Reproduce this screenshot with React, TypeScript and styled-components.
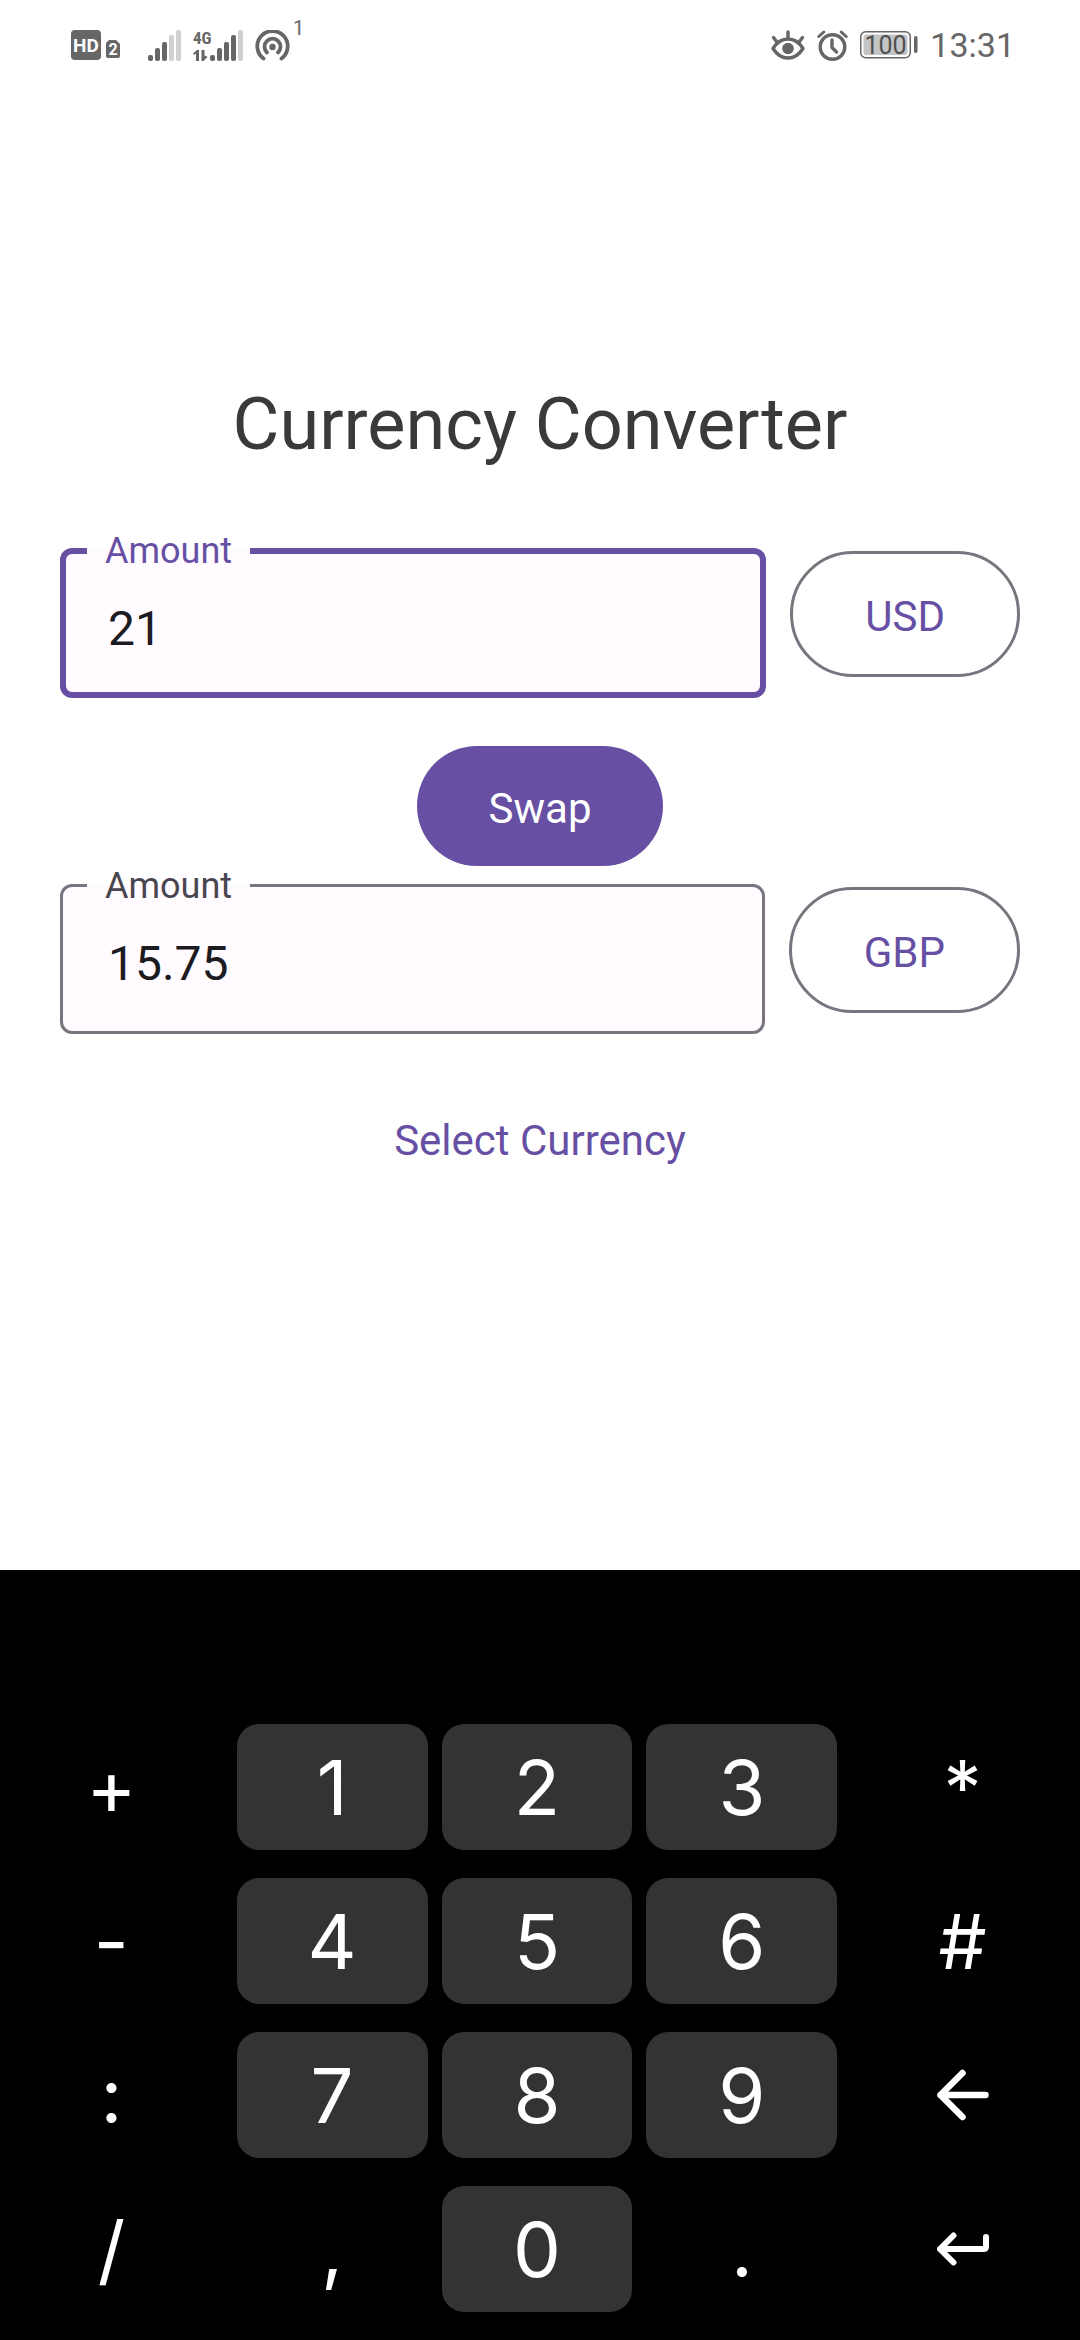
import React, { useState } from 'react';
import styled, { createGlobalStyle } from 'styled-components';

const color = {
  primary: '#6750a4',
  outline: '#79747e',
  field: '#fffbff',
  ink: '#1c1b1f',
  label: '#49454f',
  title: '#3a3a3c',
  status: '#666666',
  faint: '#d0d0d0',
  key: '#333333',
};

const GlobalStyle = createGlobalStyle`
  *, *::before, *::after { box-sizing: border-box; }
  body { margin: 0; background: #fff; }
  button, input { font: inherit; }
`;

const Screen = styled.div`
  min-height: 100vh;
  display: flex;
  flex-direction: column;
  font-family: Roboto, sans-serif;
  color: ${color.ink};
`;

/* Status bar */

const StatusBar = styled.header`
  height: 90px;
  padding: 0 65px 0 71px;
  display: flex;
  align-items: center;
  justify-content: space-between;
  color: ${color.status};
`;

const StatusGroup = styled.div<{ $gap: number }>`
  display: flex;
  align-items: center;
  gap: ${(p) => p.$gap}px;

  svg { display: block; flex: none; }
`;

const Count = styled.span`
  align-self: flex-start;
  font-size: 20px;
  line-height: 20px;
  margin-top: -12px;
`;

const Clock = styled.time`
  font-size: 34px;
  line-height: 40px;
`;

/* Converter */

const Main = styled.main`
  flex: 1;
  display: flex;
  flex-direction: column;
  align-items: center;
  justify-content: center;
  padding: 0 60px 80px;
`;

const Title = styled.h1`
  margin: 0 0 64px;
  font-size: 72px;
  line-height: 84px;
  font-weight: 400;
  color: ${color.title};
`;

const Row = styled.div`
  width: 100%;
  display: flex;
  align-items: center;
  gap: 24px;
`;

const Field = styled.fieldset<{ $active?: boolean }>`
  flex: 1;
  min-width: 0;
  margin: 0;
  padding: ${(p) => (p.$active ? '2px 0 7px' : '2px 0 11px')};
  border: ${(p) => (p.$active ? `6px solid ${color.primary}` : `3px solid ${color.outline}`)};
  border-radius: 12px;
  background: ${color.field};
  color: ${(p) => (p.$active ? color.primary : color.label)};
`;

const Legend = styled.legend<{ $active?: boolean }>`
  margin-left: ${(p) => (p.$active ? 21 : 24)}px;
  padding: 0 18px;
  font-size: 36px;
  line-height: 40px;
`;

const AmountInput = styled.input<{ $active?: boolean }>`
  display: block;
  width: 100%;
  height: 112px;
  padding: 0 ${(p) => (p.$active ? 42 : 45)}px;
  border: 0;
  outline: 0;
  background: transparent;
  color: ${color.ink};
  font-size: 48px;
`;

const PillButton = styled.button`
  height: 120px;
  padding: 6px 72px 0;
  border: 0;
  border-radius: 63px;
  background: transparent;
  color: ${color.primary};
  font-size: 42px;
  line-height: 60px;
  white-space: nowrap;
  cursor: pointer;
`;

const CurrencyButton = styled(PillButton)`
  height: 126px;
  border: 3px solid ${color.outline};
`;

const SwapButton = styled(PillButton)`
  margin-top: 48px;
  background: ${color.primary};
  color: #fff;
`;

const SelectButton = styled(PillButton)`
  margin-top: 44px;
`;

/* Keyboard */

const Keyboard = styled.section`
  padding: 154px 6px 28px 0;
  background: #000;
  display: grid;
  grid-template-columns: 7fr 6fr 6fr 6fr 7fr;
  gap: 28px 14px;
`;

const Key = styled.button<{ $filled: boolean }>`
  height: 126px;
  padding: 0;
  display: flex;
  align-items: center;
  justify-content: center;
  border: 0;
  border-radius: 22px;
  background: ${(p) => (p.$filled ? color.key : 'transparent')};
  color: #fff;
  font-family: Inter, sans-serif;
  font-size: 76px;
  line-height: 92px;
  cursor: pointer;
`;

function Bars({ lit }: { lit: number }) {
  const heights = [6, 13, 19, 26, 31];
  return (
    <g>
      {heights.map((h, i) => (
        <rect key={h} x={i * 7} y={31 - h} width="5" height={h} rx="2" fill={i < lit ? color.status : color.faint} />
      ))}
    </g>
  );
}

function HdIcon() {
  return (
    <svg width="49" height="30" viewBox="0 0 49 30" aria-label="HD 2">
      <rect width="30" height="30" rx="4" fill={color.status} />
      <text x="15" y="22" textAnchor="middle" fontFamily="Roboto, sans-serif" fontWeight="700" fontSize="19" fill="#fff">HD</text>
      <path d="M38 10h7l4 4v12a2 2 0 0 1-2 2H37a2 2 0 0 1-2-2V13z" fill={color.status} />
      <text x="42" y="25" textAnchor="middle" fontFamily="Roboto, sans-serif" fontWeight="700" fontSize="16" fill="#fff">2</text>
    </svg>
  );
}

function SignalIcon() {
  return (
    <svg width="33" height="31" viewBox="0 0 33 31" aria-label="Signal">
      <Bars lit={3} />
    </svg>
  );
}

function MobileDataIcon() {
  return (
    <svg width="50" height="43" viewBox="0 -6 50 43" aria-label="4G signal">
      <text x="0" y="14" fontFamily="'Liberation Sans Narrow', 'Roboto Condensed', Roboto, sans-serif" fontWeight="700" fontSize="17" fill={color.status}>4G</text>
      <path d="M0 23.500l4-3.500h2v11H3v-7.500L1 25z M8.500 20v11h2l4-4-2-1.500-1 1V20z" fill={color.status} />
      <g transform="translate(17 0)">
        <Bars lit={4} />
      </g>
    </svg>
  );
}

function HotspotIcon() {
  return (
    <svg width="35" height="31" viewBox="0 0 35 31" fill="none" stroke={color.status} strokeWidth="3.800" strokeLinecap="round" aria-label="Hotspot">
      <path d="M8.500 28.500a15.200 15.200 0 1 1 18 0" />
      <path d="M12 22.500a8 8 0 1 1 11 0" />
      <circle cx="17.500" cy="17" r="3.200" fill={color.status} stroke="none" />
    </svg>
  );
}

function EyeIcon() {
  return (
    <svg width="34" height="30" viewBox="0 0 34 30" fill="none" stroke={color.status} strokeWidth="3.400" strokeLinecap="round" aria-label="Eye comfort">
      <path d="M2 18.500C6 12 11 9 17 9s11 3 15 9.500C28 25 23 28 17 28S6 25 2 18.500z" strokeLinejoin="round" />
      <path d="M17 8V2M5.500 11.500L2.500 7.500M28.500 11.500l3-4" />
      <circle cx="17" cy="18.500" r="5.800" fill={color.status} stroke="none" />
    </svg>
  );
}

function AlarmIcon() {
  return (
    <svg width="31" height="31" viewBox="0 0 31 31" fill="none" stroke={color.status} strokeWidth="3.400" strokeLinecap="round" strokeLinejoin="round" aria-label="Alarm">
      <circle cx="15.500" cy="17" r="12.300" />
      <path d="M15 10v7.500l4.500 4.500" />
      <path d="M1.800 6.500l5-4.500M29.200 6.500l-5-4.500" strokeWidth="3" />
    </svg>
  );
}

function BatteryIcon() {
  return (
    <svg width="58" height="28" viewBox="0 0 58 28" aria-label="Battery 100">
      <rect x="0.750" y="0.750" width="49.500" height="26" rx="5" fill="none" stroke={color.status} strokeWidth="1.500" />
      <rect x="3.500" y="3.500" width="44" height="20.500" rx="3" fill="#c4c4c4" />
      <rect x="54" y="5" width="3.500" height="17" rx="1.700" fill={color.status} />
      <text x="25.500" y="22.500" textAnchor="middle" fontFamily="Roboto, sans-serif" fontSize="25" fill="#505050">100</text>
    </svg>
  );
}

function BackIcon() {
  return (
    <svg width="52" height="52" viewBox="0 0 52 52" fill="none" stroke="#fff" strokeWidth="6.500" strokeLinecap="round" strokeLinejoin="round">
      <path d="M25.500 4L3.500 26l22 22M3.500 26h45" />
    </svg>
  );
}

function EnterIcon() {
  return (
    <svg width="52" height="34" viewBox="0 0 52 34" fill="none" stroke="#fff" strokeWidth="6" strokeLinecap="round" strokeLinejoin="round">
      <path d="M16.500 3.500L3 17l13.500 13.500M3 17h43.500q2.500 0 2.500-2.500V5" />
    </svg>
  );
}

const keyRows = [
  ['+', '1', '2', '3', '*'],
  ['-', '4', '5', '6', '#'],
  [':', '7', '8', '9', 'back'],
  ['/', ',', '0', '.', 'enter'],
];

function keyFace(key: string) {
  if (key === 'back') return <BackIcon />;
  if (key === 'enter') return <EnterIcon />;
  return key;
}

interface AmountFieldProps {
  id: string;
  value: string;
  onChange: (value: string) => void;
  active?: boolean;
}

function AmountField({ id, value, onChange, active }: AmountFieldProps) {
  return (
    <Field $active={active}>
      <Legend $active={active}>
        <label htmlFor={id}>Amount</label>
      </Legend>
      <AmountInput id={id} $active={active} inputMode="decimal" value={value} onChange={(e) => onChange(e.target.value)} />
    </Field>
  );
}

const RATE = 0.75;

export default function App() {
  const [amount, setAmount] = useState('21');
  const [pair, setPair] = useState(['USD', 'GBP']);
  const rate = pair[0] === 'USD' ? RATE : 1 / RATE;
  const converted = amount === '' ? '' : String(Number((Number(amount) * rate).toFixed(2)));

  const press = (key: string) => {
    if (key === 'back') setAmount((a) => a.slice(0, -1));
    else if (/[0-9.]/.test(key)) setAmount((a) => a + key);
  };

  return (
    <Screen>
      <GlobalStyle />
      <StatusBar>
        <StatusGroup $gap={12}>
          <StatusGroup $gap={28}>
            <HdIcon />
            <SignalIcon />
          </StatusGroup>
          <MobileDataIcon />
          <StatusGroup $gap={3}>
            <HotspotIcon />
            <Count>1</Count>
          </StatusGroup>
        </StatusGroup>
        <StatusGroup $gap={12}>
          <EyeIcon />
          <AlarmIcon />
          <BatteryIcon />
          <Clock>13:31</Clock>
        </StatusGroup>
      </StatusBar>

      <Main>
        <Title>Currency Converter</Title>
        <Row>
          <AmountField id="amount-from" value={amount} onChange={setAmount} active />
          <CurrencyButton type="button">{pair[0]}</CurrencyButton>
        </Row>
        <SwapButton type="button" onClick={() => setPair(([a, b]) => [b, a])}>Swap</SwapButton>
        <Row>
          <AmountField id="amount-to" value={converted} onChange={(v) => setAmount(String(Number(v) / rate))} />
          <CurrencyButton type="button">{pair[1]}</CurrencyButton>
        </Row>
        <SelectButton type="button">Select Currency</SelectButton>
      </Main>

      <Keyboard aria-label="Keyboard">
        {keyRows.flat().map((key) => (
          <Key key={key} type="button" aria-label={key} $filled={/[0-9]/.test(key)} onClick={() => press(key)}>
            {keyFace(key)}
          </Key>
        ))}
      </Keyboard>
    </Screen>
  );
}
